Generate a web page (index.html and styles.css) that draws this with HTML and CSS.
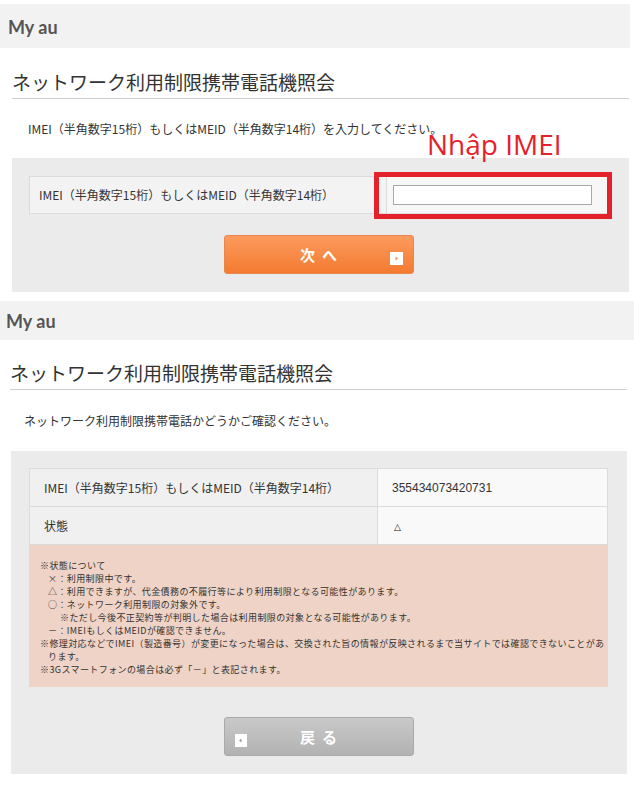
FILE: index.html
```html
<!DOCTYPE html>
<html lang="ja">
<head>
    <meta charset="UTF-8">
    <meta name="viewport" content="width=device-width, initial-scale=1.0">
    <title>ネットワーク利用制限携帯電話機照会</title>
    <link rel="stylesheet" href="styles.css">
</head>
<body>
    <div class="screen" id="screenone">
        <div class="myau">My au</div>
        <h1 class="pagetitle">ネットワーク利用制限携帯電話機照会</h1>
        <p class="lead">IMEI（半角数字15桁）もしくはMEID（半角数字14桁）を入力してください。</p>
        <div class="panel">
            <div class="formrow">
                <div class="labelcell">IMEI（半角数字15桁）もしくはMEID（半角数字14桁）</div>
                <div class="inputcell"><input type="text" name="imei" class="imeibox"></div>
            </div>
            <div class="btnrow">
                <div class="btn btnnext">
                    <span class="btntext">次へ</span>
                    <span class="arrowbox arrowright">
                        <svg width="13" height="13" viewBox="0 0 13 13"><rect width="13" height="13" fill="#fff"/><path d="M5.5 4.5 L8 6.5 L5.5 8.5 Z" fill="#f08a4b"/></svg>
                    </span>
                </div>
            </div>
            <!-- annotation drawn over the screenshot -->
            <div class="markbox"></div>
            <div class="marktext">Nhập IMEI</div>
        </div>
    </div>

    <div class="screen" id="screentwo">
        <div class="myau">My au</div>
        <h1 class="pagetitle">ネットワーク利用制限携帯電話機照会</h1>
        <p class="lead">ネットワーク利用制限携帯電話かどうかご確認ください。</p>
        <div class="panel">
            <table class="result">
                <tr>
                    <th>IMEI（半角数字15桁）もしくはMEID（半角数字14桁）</th>
                    <td>355434073420731</td>
                </tr>
                <tr>
                    <th>状態</th>
                    <td><span class="state">△</span></td>
                </tr>
            </table>
            <div class="notes">
                <p>※状態について</p>
                <p class="ind1">×：利用制限中です。</p>
                <p class="ind1">△：利用できますが、代金債務の不履行等により利用制限となる可能性があります。</p>
                <p class="ind1">○：ネットワーク利用制限の対象外です。</p>
                <p class="ind2">※ただし今後不正契約等が判明した場合は利用制限の対象となる可能性があります。</p>
                <p class="ind1">－：IMEIもしくはMEIDが確認できません。</p>
                <p class="hang">※修理対応などでIMEI（製造番号）が変更になった場合は、交換された旨の情報が反映されるまで当サイトでは確認できないことがあ<br>ります。</p>
                <p>※3Gスマートフォンの場合は必ず「－」と表記されます。</p>
            </div>
            <div class="btnrow backrow">
                <div class="btn btnback">
                    <span class="arrowbox arrowleft">
                        <svg width="12" height="13" viewBox="0 0 12 13"><rect width="12" height="13" fill="#fff"/><path d="M6.5 4.5 L4 6.5 L6.5 8.5 Z" fill="#9a9a9a"/></svg>
                    </span>
                    <span class="btntext">戻る</span>
                </div>
            </div>
        </div>
    </div>
</body>
</html>
```

FILE: styles.css
```css
body{
    margin: 0;
    background-color: #fff;
    font-family: "Noto Sans CJK JP", "Liberation Sans", sans-serif;
    color: #333;
}

.screen{
    width: 634px;
}

#screenone{
    padding-top: 4px;
}

.myau{
    background-color: #f2f2f2;
    font-family: Lato, "Liberation Sans", sans-serif;
    font-weight: 700;
    font-size: 18px;
    color: #555;
}

#screenone .myau{
    height: 44px;
    line-height: 46px;
    padding-left: 8px;
    margin-right: 4px;
}

#screentwo .myau{
    height: 39px;
    line-height: 40px;
    padding-left: 6px;
    margin-top: 9px;
}

.pagetitle{
    font-size: 19px;
    font-weight: 400;
    line-height: 28px;
    margin: 0;
    padding-bottom: 2px;
    border-bottom: 1px solid #cfcfcf;
    color: #333;
}

#screenone .pagetitle{
    margin: 20px 5px 0 12px;
}

#screentwo .pagetitle{
    margin: 19px 7px 0 10px;
}

.lead{
    font-size: 12px;
    line-height: 18px;
    margin: 0;
}

#screenone .lead{
    margin: 21px 0 20px 28px;
}

#screentwo .lead{
    margin: 22px 0 21px 24px;
}

.panel{
    background-color: #ebebec;
    position: relative;
}

#screenone .panel{
    margin: 0 5px 0 12px;
    padding: 18px 21px 18px 17px;
}

#screentwo .panel{
    margin: 0 7px 0 11px;
    padding: 17px 19px 18px 18px;
}

.formrow{
    display: flex;
    height: 38px;
    border: 1px solid #dcdcdc;
    box-sizing: border-box;
    background-color: #f3f3f3;
}

.labelcell{
    width: 347px;
    padding-left: 9px;
    font-size: 12px;
    line-height: 36px;
    border-right: 1px solid #dcdcdc;
}

.inputcell{
    flex: 1;
    display: flex;
    align-items: center;
    padding-left: 6px;
    background-color: #f7f7f7;
}

.imeibox{
    width: 199px;
    height: 20px;
    box-sizing: border-box;
    border: 1px solid #a9a9a9;
    background-color: #fff;
    margin: 0;
    padding: 0;
}

.btnrow{
    display: flex;
    justify-content: center;
    margin-top: 21px;
}

.backrow{
    margin-top: 30px;
}

.btn{
    width: 190px;
    height: 39px;
    box-sizing: border-box;
    border-radius: 3px;
    display: flex;
    align-items: center;
    justify-content: center;
    position: relative;
    color: #fff;
    font-weight: 700;
    font-size: 15px;
}

.btnnext{
    background: linear-gradient(#fc9b5e, #f47a30);
    border: 1px solid #e8874d;
}

.btnback{
    background: linear-gradient(#c9c9c9, #b2b2b2);
    border: 1px solid #aaaaaa;
}

.btntext{
    letter-spacing: 7px;
    margin-left: 7px;
}

.arrowbox{
    position: absolute;
    top: 12px;
    height: 13px;
    display: block;
}

.arrowright{
    right: 10px;
}

.arrowleft{
    left: 10px;
}

.result{
    width: 100%;
    border-collapse: collapse;
    font-size: 12px;
}

.result th, .result td{
    height: 37px;
    border: 1px solid #dcdcdc;
    text-align: left;
    font-weight: 400;
    padding: 0;
}

.result th{
    width: 333px;
    padding-left: 14px;
    background-color: #f0f0f0;
}

.result td{
    padding-left: 14px;
    background-color: #f9f9f9;
    font-family: "Liberation Sans", sans-serif;
    font-size: 12px;
}

.state{
    font-family: "DejaVu Sans", sans-serif;
    font-size: 9px;
    color: #111;
    padding-left: 2px;
}

.notes{
    background-color: #efd3c6;
    height: 142px;
    box-sizing: border-box;
    padding: 14px 2px 0 11px;
    font-size: 9px;
    letter-spacing: 0.4px;
    line-height: 13px;
}

.notes p{
    margin: 0;
}

.ind1{
    padding-left: 8px;
}

.ind2{
    padding-left: 20px;
}

.hang{
    padding-left: 8px;
    text-indent: -8px;
}

.markbox{
    position: absolute;
    left: 362px;
    top: 14px;
    width: 238px;
    height: 47px;
    box-sizing: border-box;
    border: 5px solid #e3222c;
}

.marktext{
    position: absolute;
    left: 415px;
    top: -29px;
    font-family: "Open Sans", sans-serif;
    font-size: 28px;
    line-height: 30px;
    color: #e3222c;
}
```
